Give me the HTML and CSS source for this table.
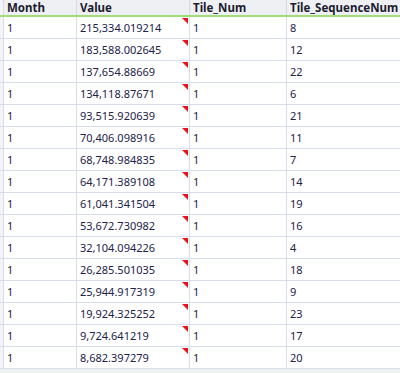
FILE: index.html
```html
<!DOCTYPE html>
<html>
<head>
<meta charset="utf-8">
<link rel="stylesheet" href="styles.css">
</head>
<body>
<div class="grid">
  <div class="row head">
    <div class="gut"></div>
    <div class="c">Month</div>
    <div class="c">Value</div>
    <div class="c">Tile_Num</div>
    <div class="c">Tile_SequenceNum</div>
  </div>
  <div class="row"><div class="gut"></div><div class="c">1</div><div class="c flag">215,334.019214</div><div class="c">1</div><div class="c">8</div></div>
  <div class="row"><div class="gut"></div><div class="c">1</div><div class="c flag">183,588.002645</div><div class="c">1</div><div class="c">12</div></div>
  <div class="row"><div class="gut"></div><div class="c">1</div><div class="c flag">137,654.88669</div><div class="c">1</div><div class="c">22</div></div>
  <div class="row"><div class="gut"></div><div class="c">1</div><div class="c flag">134,118.87671</div><div class="c">1</div><div class="c">6</div></div>
  <div class="row"><div class="gut"></div><div class="c">1</div><div class="c flag">93,515.920639</div><div class="c">1</div><div class="c">21</div></div>
  <div class="row"><div class="gut"></div><div class="c">1</div><div class="c flag">70,406.098916</div><div class="c">1</div><div class="c">11</div></div>
  <div class="row"><div class="gut"></div><div class="c">1</div><div class="c flag">68,748.984835</div><div class="c">1</div><div class="c">7</div></div>
  <div class="row"><div class="gut"></div><div class="c">1</div><div class="c flag">64,171.389108</div><div class="c">1</div><div class="c">14</div></div>
  <div class="row"><div class="gut"></div><div class="c">1</div><div class="c flag">61,041.341504</div><div class="c">1</div><div class="c">19</div></div>
  <div class="row"><div class="gut"></div><div class="c">1</div><div class="c flag">53,672.730982</div><div class="c">1</div><div class="c">16</div></div>
  <div class="row"><div class="gut"></div><div class="c">1</div><div class="c flag">32,104.094226</div><div class="c">1</div><div class="c">4</div></div>
  <div class="row"><div class="gut"></div><div class="c">1</div><div class="c flag">26,285.501035</div><div class="c">1</div><div class="c">18</div></div>
  <div class="row"><div class="gut"></div><div class="c">1</div><div class="c flag">25,944.917319</div><div class="c">1</div><div class="c">9</div></div>
  <div class="row"><div class="gut"></div><div class="c">1</div><div class="c flag">19,924.325252</div><div class="c">1</div><div class="c">23</div></div>
  <div class="row"><div class="gut"></div><div class="c">1</div><div class="c flag">9,724.641219</div><div class="c">1</div><div class="c">17</div></div>
  <div class="row"><div class="gut"></div><div class="c">1</div><div class="c flag">8,682.397279</div><div class="c">1</div><div class="c">20</div></div>
</div>
</body>
</html>
```
FILE: styles.css
```css
html, body {
  margin: 0;
  padding: 0;
  background: #f0f0f0;
  width: 400px;
  height: 373px;
  overflow: hidden;
}
.grid {
  background: #ffffff;
  font-family: "Noto Sans", "Open Sans", sans-serif;
  font-size: 11px;
  color: #22224a;
}
.row {
  display: grid;
  grid-template-columns: 3px 73px 113px 97px 1fr;
  height: 22px;
  box-sizing: border-box;
  border-bottom: 1px solid #d7deea;
}
.row.head {
  height: 17px;
  background: #eef0f4;
  border-bottom: 2px solid #a2dc78;
  font-weight: bold;
  font-size: 11.5px;
  color: #1c1c30;
}
.gut {
  background: #f3f4f7;
}
.c {
  position: relative;
  border-left: 1px solid #d7deea;
  padding-left: 3px;
  display: flex;
  align-items: center;
  white-space: nowrap;
  overflow: hidden;
}
.head .c {
  border-left-color: #d5dae3;
}
.flag::after {
  content: "";
  position: absolute;
  top: 1px;
  right: 1px;
  width: 0;
  height: 0;
  border-top: 6px solid #e8141c;
  border-left: 6px solid transparent;
}
```
